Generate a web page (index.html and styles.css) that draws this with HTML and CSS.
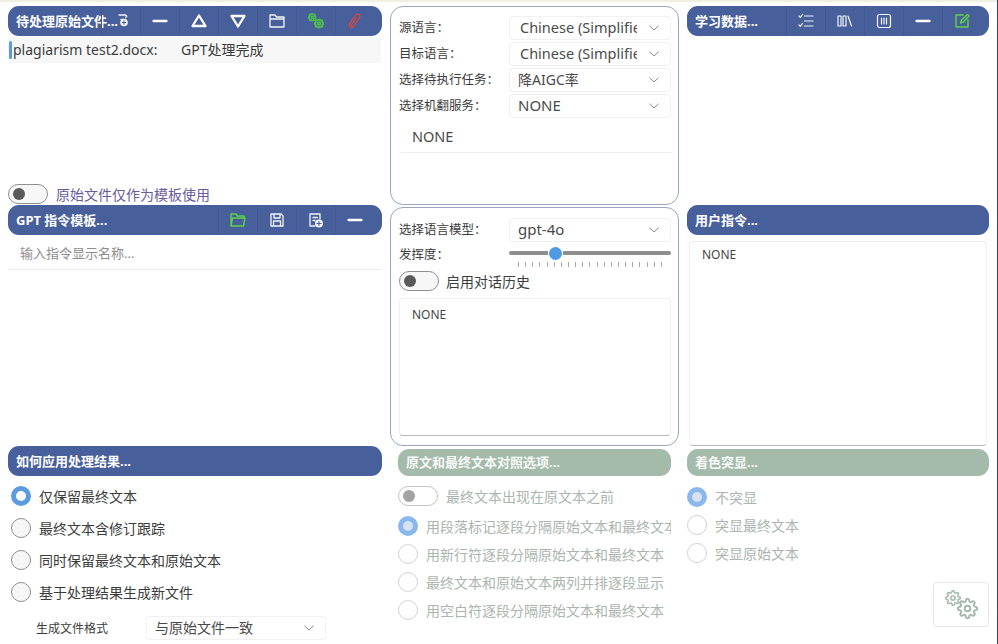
FILE: index.html
```html
<!DOCTYPE html>
<html lang="zh-CN">
<head>
<meta charset="utf-8">
<title>GPT 文档处理</title>
<link rel="stylesheet" href="styles.css">
</head>
<body>
<svg class="defs" width="0" height="0" aria-hidden="true">
  <symbol id="gear" viewBox="0 0 24 24">
    <circle cx="12" cy="12" r="3.2"/>
    <path d="M19.4 15a1.65 1.65 0 0 0 .33 1.82l.06.06a2 2 0 0 1 0 2.83 2 2 0 0 1-2.83 0l-.06-.06a1.65 1.65 0 0 0-1.82-.33 1.65 1.65 0 0 0-1 1.51V21a2 2 0 0 1-2 2 2 2 0 0 1-2-2v-.09A1.65 1.65 0 0 0 9 19.4a1.65 1.65 0 0 0-1.82.33l-.06.06a2 2 0 0 1-2.83 0 2 2 0 0 1 0-2.83l.06-.06a1.65 1.65 0 0 0 .33-1.82 1.65 1.65 0 0 0-1.51-1H3a2 2 0 0 1-2-2 2 2 0 0 1 2-2h.09A1.65 1.65 0 0 0 4.6 9a1.65 1.65 0 0 0-.33-1.82l-.06-.06a2 2 0 0 1 0-2.83 2 2 0 0 1 2.83 0l.06.06a1.65 1.65 0 0 0 1.82.33H9a1.65 1.65 0 0 0 1-1.51V3a2 2 0 0 1 2-2 2 2 0 0 1 2 2v.09a1.65 1.65 0 0 0 1 1.51 1.65 1.65 0 0 0 1.82-.33l.06-.06a2 2 0 0 1 2.83 0 2 2 0 0 1 0 2.83l-.06.06a1.65 1.65 0 0 0-.33 1.82V9a1.65 1.65 0 0 0 1.51 1H21a2 2 0 0 1 2 2 2 2 0 0 1-2 2h-.09a1.65 1.65 0 0 0-1.51 1z"/>
  </symbol>
  <symbol id="chev" viewBox="0 0 10 6"><path d="M.5.8 5 5 9.5.8"/></symbol>
  <symbol id="minus" viewBox="0 0 16 16"><path d="M1.5 8h13"/></symbol>
</svg>

<div class="topstrip"></div>
<main class="app">

  <section class="col col-left">
    <header class="bar">
      <span class="bar-title">待处理原始文件...</span>
      <div class="bar-tools">
        <button class="tool"><svg class="ico" viewBox="0 0 16 16"><path d="M6 2h6.500l1.300 1.300L12.500 4.600M8 6.500h1.500"/><circle class="dot" cx="11" cy="9.500" r="3.800"/><path class="dot-plus" d="M9.300 9.500h3.400M11 7.800v3.400"/></svg></button>
        <button class="tool"><svg class="ico ico-thick"><use href="#minus"/></svg></button>
        <button class="tool"><svg class="ico ico-thick" viewBox="0 0 16 16"><path d="M8 2.500 14.500 13h-13z"/></svg></button>
        <button class="tool"><svg class="ico ico-thick" viewBox="0 0 16 16"><path d="M8 13.500 1.500 3h13z"/></svg></button>
        <button class="tool"><svg class="ico" viewBox="0 0 16 16"><path d="M1 14V2h5l1.500 2H15v10zM1 6h14"/></svg></button>
        <button class="tool"><svg class="ico ico-greenfill" viewBox="0 0 16 16"><use href="#gear" x="0" y="0" width="8.500" height="8.500"/><use href="#gear" x="6" y="5.500" width="10" height="10"/></svg></button>
        <button class="tool"><svg class="ico ico-red" viewBox="0 0 16 16"><path d="M3.300 14.200c-1.400-.9-1.200-2.700-.3-4.100l5.200-7.500c.9-1.300 2.500-2 3.800-1.200 1.300.8 1.200 2.500.3 3.800L7 12.700c-.6.8-1.600 1-2.200.6-.7-.4-.6-1.400-.1-2.200l4.600-6.600M3.300 14.200c.9.6 2 .4 2.800-.4"/></svg></button>
      </div>
    </header>
    <div class="file-list">
      <div class="file-row"><span class="file-mark"></span><span class="file-name">plagiarism test2.docx:</span><span class="file-state">GPT处理完成</span></div>
    </div>
    <label class="toggle-line toggle-template"><span class="toggle"></span><span class="purple">原始文件仅作为模板使用</span></label>

    <header class="bar">
      <span class="bar-title">GPT 指令模板...</span>
      <div class="bar-tools">
        <button class="tool"><svg class="ico ico-green" viewBox="0 0 16 16"><path d="M1 14V2h5l1.500 2H14v2M1 14l1.500-8H15l-1.500 8z"/></svg></button>
        <button class="tool"><svg class="ico" viewBox="0 0 16 16"><path d="M2 2h10l2 2v10H2zM5 2v4h6V2M4.500 14V9h7v5"/></svg></button>
        <button class="tool"><svg class="ico" viewBox="0 0 16 16"><path d="M7 14H2V2h10v5M5 5.500h4.500M5 8.500h2"/><circle class="dot" cx="11" cy="11.500" r="4"/><path class="dot-plus" d="M9 11.500h4M11 9.500v4"/></svg></button>
        <button class="tool"><svg class="ico ico-thick"><use href="#minus"/></svg></button>
      </div>
    </header>
    <div class="line-input placeholder">输入指令显示名称...</div>
    <div class="spacer-a"></div>

    <header class="bar">
      <span class="bar-title">如何应用处理结果...</span>
    </header>
    <div class="radios radios-wide">
      <label class="radio-line"><span class="radio on"></span>仅保留最终文本</label>
      <label class="radio-line"><span class="radio"></span>最终文本含修订跟踪</label>
      <label class="radio-line"><span class="radio"></span>同时保留最终文本和原始文本</label>
      <label class="radio-line"><span class="radio"></span>基于处理结果生成新文件</label>
    </div>
    <div class="format-row">
      <span class="format-label">生成文件格式</span>
      <div class="select select-format"><span class="select-text select-cjk">与原始文件一致</span><svg class="chev"><use href="#chev"/></svg></div>
    </div>
  </section>

  <section class="col col-mid">
    <div class="box box-top">
      <div class="form-row"><span class="form-label">源语言：</span><div class="select"><span class="select-text ind">Chinese (Simplified)</span><svg class="chev"><use href="#chev"/></svg></div></div>
      <div class="form-row"><span class="form-label">目标语言：</span><div class="select"><span class="select-text ind">Chinese (Simplified)</span><svg class="chev"><use href="#chev"/></svg></div></div>
      <div class="form-row"><span class="form-label">选择待执行任务：</span><div class="select"><span class="select-text select-cjk">降AIGC率</span><svg class="chev"><use href="#chev"/></svg></div></div>
      <div class="form-row"><span class="form-label">选择机翻服务：</span><div class="select"><span class="select-text">NONE</span><svg class="chev"><use href="#chev"/></svg></div></div>
      <div class="line-value">NONE</div>
    </div>
    <div class="box box-model">
      <div class="form-row"><span class="form-label">选择语言模型：</span><div class="select"><span class="select-text">gpt-4o</span><svg class="chev"><use href="#chev"/></svg></div></div>
      <div class="form-row slider-row">
        <span class="form-label">发挥度：</span>
        <div class="slider">
          <div class="track"><span class="track-left"></span><span class="thumb"></span><span class="track-right"></span></div>
          <div class="ticks"><i></i><i></i><i></i><i></i><i></i><i></i><i></i><i></i><i></i><i></i><i></i><i></i><i></i><i></i><i></i><i></i><i></i><i></i><i></i><i></i><i></i></div>
        </div>
      </div>
      <label class="toggle-line toggle-history"><span class="toggle"></span>启用对话历史</label>
      <div class="textarea ta-mid">NONE</div>
    </div>
    <div class="mid-lower">
      <header class="bar bar-off"><span class="bar-title">原文和最终文本对照选项...</span></header>
      <label class="toggle-line toggle-compare off"><span class="toggle"></span>最终文本出现在原文本之前</label>
      <div class="radios radios-off">
        <label class="radio-line"><span class="radio on"></span>用段落标记逐段分隔原始文本和最终文本</label>
        <label class="radio-line"><span class="radio"></span>用新行符逐段分隔原始文本和最终文本</label>
        <label class="radio-line"><span class="radio"></span>最终文本和原始文本两列并排逐段显示</label>
        <label class="radio-line"><span class="radio"></span>用空白符逐段分隔原始文本和最终文本</label>
      </div>
    </div>
  </section>

  <section class="col col-right">
    <header class="bar">
      <span class="bar-title">学习数据...</span>
      <div class="bar-tools">
        <button class="tool"><svg class="ico ico-thin" viewBox="0 0 16 16"><path d="M6.500 3H15M6.500 8H15M6.500 13H15M1 3l1.300 1.300L4.500 1.500M1 12l1.300 1.300L4.500 10.500"/></svg></button>
        <button class="tool"><svg class="ico ico-thin" viewBox="0 0 16 16"><path d="M1 3h3v10H1zM6 3h3v10H6zM11 3l3.500 10"/></svg></button>
        <button class="tool"><svg class="ico ico-thin" viewBox="0 0 16 16"><rect x="1.500" y="1.500" width="13" height="13" rx="2"/><path d="M5.500 5v6M8 5v6M10.500 5v6"/></svg></button>
        <button class="tool"><svg class="ico ico-thick"><use href="#minus"/></svg></button>
        <button class="tool"><svg class="ico ico-green" viewBox="0 0 16 16"><path d="M9 2H2v12h12V7M6.500 10l1-3L13.500 1.500l1.500 1.500L9.500 9z"/></svg></button>
      </div>
    </header>
    <div class="spacer-b"></div>
    <header class="bar"><span class="bar-title">用户指令...</span></header>
    <div class="textarea ta-right">NONE</div>
    <header class="bar bar-off bar-right-off"><span class="bar-title">着色突显...</span></header>
    <div class="radios radios-off radios-color">
      <label class="radio-line"><span class="radio on"></span>不突显</label>
      <label class="radio-line"><span class="radio"></span>突显最终文本</label>
      <label class="radio-line"><span class="radio"></span>突显原始文本</label>
    </div>
    <button class="settings">
      <svg class="gear-small"><use href="#gear"/></svg>
      <svg class="gear-big"><use href="#gear"/></svg>
    </button>
  </section>

</main>
<div class="edge"></div>
</body>
</html>
```

FILE: styles.css
```css
* { box-sizing: border-box; }
html, body { margin: 0; height: 100%; overflow: hidden; background: #fff; }
body {
  font-family: "Noto Sans", "Noto Sans CJK SC", sans-serif;
  font-size: 14px;
  color: #3c3c3c;
}
.defs { position: absolute; }
.topstrip { height: 2px; background: #f1efdf; }
.edge { position: fixed; right: 0; top: 0; bottom: 0; width: 1px; background: #2c4a63; }

.app { display: flex; gap: 8px; padding: 4px 9px 0 8px; height: 642px; }
.col { display: flex; flex-direction: column; min-width: 0; }
.col-left { width: 374px; }
.col-mid { width: 289px; }
.col-right { width: 302px; }

/* header bars */
.bar {
  display: flex; align-items: center; flex: none;
  height: 30px; padding: 0 8px;
  background: #475f9a; border-radius: 11px;
  color: #fff;
}
.bar-title { flex: 1 1 0; min-width: 0; white-space: nowrap; font-size: 13px; font-weight: 700; line-height: 30px; }
.bar-tools { display: flex; position: relative; }
.tool {
  width: 39px; height: 30px; padding: 0; border: 0;
  border-left: 1px solid #425890; background: none;
  display: flex; align-items: center; justify-content: center;
}
.ico { width: 16px; height: 16px; fill: none; stroke: #f2f4f8; stroke-width: 1.3; stroke-linejoin: round; stroke-linecap: round; }
.ico-thick { stroke-width: 2.300; stroke: #fff; }
.ico-thin { stroke-width: 1.200; }
.ico-green { stroke: #5fd24a; stroke-width: 1.400; }
.ico-red { stroke: #d04a47; stroke-width: 1.300; }
.ico-greenfill { fill: none; stroke: #4cc24a; stroke-width: 4; }
.dot { fill: #f2f4f8; stroke: none; }
.dot-plus { stroke: #475f9a; stroke-width: 1.100; }

/* left column */
.file-list { height: 148px; padding-top: 1px; }
.file-row { display: flex; align-items: center; height: 26px; padding: 0 0 2px 1px; margin-right: 1px; background: #f7f7f7; border-radius: 3px; font-size: 14px; white-space: nowrap; }
.file-mark { width: 3px; height: 18px; margin: 2px 1px 0 0; background: #5b9bd5; border-radius: 2px; }
.file-name { width: 168px; }

.toggle-line { display: flex; align-items: center; gap: 8px; font-size: 14px; }
.toggle {
  position: relative; flex: none; width: 40px; height: 20px;
  border: 1px solid #8f8f8f; border-radius: 10px; background: #f7f7f7;
}
.toggle::before {
  content: ""; position: absolute; left: 4px; top: 3px;
  width: 12px; height: 12px; border-radius: 50%; background: #5a5a5a;
}
.toggle-template { height: 20px; margin: 0 0 1px; }
.purple { color: #6a5b9c; }

.line-input { flex: none; height: 35px; padding: 0 12px; margin-right: 1px; line-height: 36px; font-size: 13px; border-bottom: 1px solid #ececec; }
.placeholder { color: #8d8d8d; }
.spacer-a { flex: none; height: 176px; }

.radios { display: flex; flex-direction: column; }
.radio-line { display: flex; align-items: center; gap: 8px; height: 28px; white-space: nowrap; overflow: hidden; font-size: 14px; }
.radio { flex: none; width: 20px; height: 20px; border-radius: 50%; border: 1px solid #8f8f8f; background: #f7f7f7; }
.radio.on { border: 5px solid #5b9be0; background: #fff; }
.radios-wide { padding: 4px 0 0 3px; }
.radios-wide .radio-line { height: 32px; }

.format-row { display: flex; align-items: center; padding: 8px 0 0 28px; }
.format-label { width: 110px; font-size: 12px; }
.select {
  display: flex; align-items: center; height: 24px; width: 162px; flex: none;
  border: 1px solid #f0f0f0; border-radius: 4px; padding: 0 11px 0 8px;
  font-size: 15px; color: #4a4a4a;
}
.select-format { width: 180px; }
.select-text { flex: 1 1 0; min-width: 0; overflow: hidden; white-space: nowrap; padding-bottom: 1px; line-height: 21px; }
.select-cjk { font-size: 14px; }
.select-text.ind { margin-left: 2px; margin-right: 12px; font-size: 14.500px; }
.chev { flex: none; width: 10px; height: 6px; fill: none; stroke: #8a8a8a; stroke-width: 1; }

/* middle column */
.box { flex: none; border: 1px solid #9aa6c0; border-radius: 13px; padding: 0 7px 0 8px; }
.box-top { height: 199px; padding-top: 9px; }
.box-model { height: 239px; margin-top: 2px; padding-top: 10px; }
.form-row { display: flex; align-items: center; justify-content: space-between; height: 24px; margin-bottom: 2px; font-size: 12.500px; }
.form-label { padding-bottom: 3px; }
.line-value { height: 32px; margin: 3px -1px 0 2px; padding-left: 11px; font-size: 14.500px; line-height: 30px; border-bottom: 1px solid #eeeeee; color: #4a4a4a; }

.slider-row { margin-bottom: 0; height: 26px; align-items: flex-start; }
.slider { width: 162px; padding-top: 3px; }
.track { display: flex; align-items: center; height: 12px; }
.track-left { flex: none; width: 39px; height: 4px; background: #8e8e8e; border-radius: 2px 0 0 2px; }
.thumb { flex: none; width: 13px; height: 13px; margin: 0 1px; border-radius: 50%; background: #4f9ae2; box-shadow: 0 0 0 1px #fff; }
.track-right { flex: 1; height: 4px; background: #8e8e8e; border-radius: 0 2px 2px 0; }
.ticks { display: flex; justify-content: space-between; padding: 3px 9px 0; }
.ticks i { width: 1px; height: 5px; background: #a9a9a9; }

.toggle-history { height: 20px; margin-top: 1px; gap: 7px; font-size: 14px; }
.textarea { border: 1px solid #efefef; border-bottom-color: #b8b8c4; border-radius: 4px; font-size: 12px; color: #444; }
.ta-mid { width: 272px; height: 138px; margin-top: 7px; padding: 7px 12px; }

.mid-lower { display: flex; flex-direction: column; padding: 0 8px; }
.bar-off { height: 27px; margin-top: 3px; background: #a4bbab; }
.bar-off .bar-title { color: #f7faf7; line-height: 27px; }
.toggle-compare { margin-top: 10px; height: 20px; font-size: 14px; color: #a9b5ad; }
.toggle-compare .toggle { border-color: #c4c4c4; background: #fff; }
.toggle-compare .toggle::before { background: #a3a3a3; }
.radios-off { color: #a9b5ad; padding-top: 6px; }
.radios-off .radio { border-color: #d2d2d2; background: #fff; }
.radios-off .radio.on { border-color: #8bb8ec; background: #d7e3f4; }

/* right column */
.spacer-b { flex: none; height: 169px; }
.ta-right { flex: none; width: 298px; height: 205px; margin: 6px 2px 0; padding: 4px 12px; }
.bar-right-off { margin-top: 3px; }
.radios-color { padding-top: 7px; }
.settings {
  align-self: flex-end; position: relative; width: 56px; height: 45px; margin-top: 15px;
  padding: 0; background: #fff; border: 1px solid #e6e6e6; border-radius: 4px;
}
.gear-small, .gear-big { position: absolute; fill: none; stroke: #a4b8ac; stroke-width: 2.200; }
.gear-small { left: 11px; top: 7px; width: 16px; height: 16px; }
.gear-big { left: 23px; top: 15px; width: 21px; height: 21px; }
```
